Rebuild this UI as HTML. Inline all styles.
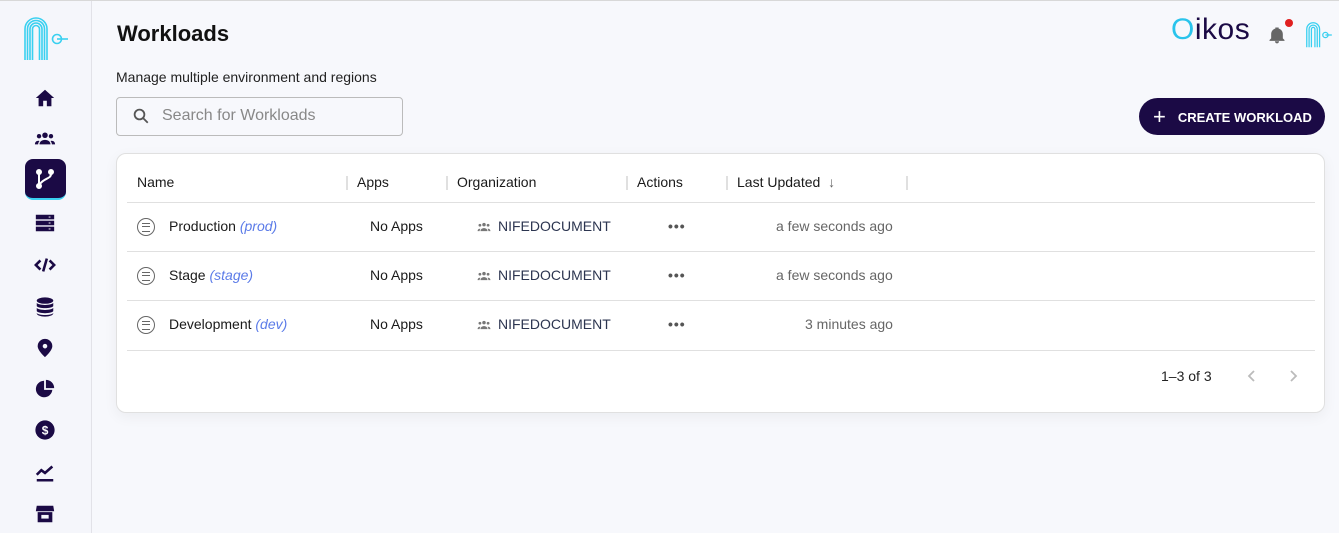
<!DOCTYPE html>
<html><head><style>
*{box-sizing:border-box;margin:0;padding:0}
body{width:1339px;height:532px;overflow:hidden;background:#f7f8fc;font-family:"Liberation Sans",sans-serif;color:#1a1a1a;position:relative;border-top:1px solid #d8d8d8}
.side{position:absolute;left:0;top:0;width:92px;height:532px;border-right:1px solid #e2e2e8;background:#f5f6fb}
.ic{position:absolute;left:34px;width:22px;height:22px}
.abs{position:absolute}
.card{position:absolute;left:116px;top:152px;width:1209px;height:260px;background:#fff;border:1px solid #e0e0e0;border-radius:10px;box-shadow:0 4px 14px rgba(0,0,0,.05)}
.hl{position:absolute;height:1px;background:#e0e0e0;left:10px;width:1188px}
.t{position:absolute;font-size:14px}
.sep{position:absolute;width:2px;height:14px;background:#e0e0e0;top:22px}
.org{color:#2c3550}
.dots{position:absolute;font-size:14px;letter-spacing:1px;color:#555;font-weight:bold}
.ri{position:absolute;left:20px;width:18px;height:18px;border:1.6px solid #666;border-radius:50%}
.ri:before{content:"";position:absolute;left:3.5px;top:3.5px;width:8px;height:7px;border-top:1.5px solid #666;border-bottom:1.5px solid #666}
.ri:after{content:"";position:absolute;left:3.5px;top:6.8px;width:8px;height:1.5px;background:#666}
</style></head><body>
<div class="side">
<svg class="abs" style="left:22px;top:14px" width="48" height="48" viewBox="0 0 48 48" fill="none" stroke="#3ad0f0" stroke-width="1.6">
<path d="M3 45V14a11 11 0 0 1 22 0v31"/><path d="M5.5 45V14a8.5 8.5 0 0 1 17 0v31"/><path d="M8 45V14a6 6 0 0 1 12 0v31"/><path d="M10.5 45V14a3.5 3.5 0 0 1 7 0v31"/>
<circle cx="35" cy="24" r="4.5"/><path d="M35 24h11"/></svg>
<svg class="ic" style="top:86px" viewBox="0 0 24 24" fill="#1b0a45"><path d="M12 3 2 12h3v9h5v-6h4v6h5v-9h3z"/></svg>
<svg class="ic" style="top:126px" viewBox="0 0 24 24" fill="#1b0a45"><circle cx="12" cy="9" r="3"/><circle cx="5.5" cy="10" r="2.4"/><circle cx="18.5" cy="10" r="2.4"/><path d="M6 19c0-3 2.5-5 6-5s6 2 6 5zM1 19c0-2.5 1.5-4 4-4l1 .3C5 16.5 4.5 18 4.5 19zM23 19c0-2.5-1.5-4-4-4l-1 .3c1 1.2 1.5 2.7 1.5 3.7z"/></svg>
<div class="abs" style="left:25px;top:158px;width:41px;height:41px;background:#1b0a45;border-radius:8px;border-bottom:2px solid #3ad0f0"></div>
<svg class="abs" style="left:33px;top:166px" width="24" height="24" viewBox="0 0 24 24" fill="none" stroke="#fff" stroke-width="2"><circle cx="6" cy="5" r="2" fill="#fff"/><circle cx="6" cy="19" r="2" fill="#fff"/><circle cx="18" cy="5" r="2" fill="#fff"/><path d="M6 7v10M18 7c0 5-7 4-11 10"/></svg>
<svg class="ic" style="top:211px" viewBox="0 0 24 24" fill="#1b0a45"><rect x="2" y="3" width="20" height="5"/><rect x="2" y="9.5" width="20" height="5"/><rect x="2" y="16" width="20" height="5"/><g fill="#fff"><rect x="16" y="5" width="2" height="1"/><rect x="16" y="11.5" width="2" height="1"/><rect x="16" y="18" width="2" height="1"/></g></svg>
<svg class="ic" style="top:253px" viewBox="0 0 24 24" fill="none" stroke="#1b0a45" stroke-width="2.8"><path d="M7 7 2 12l5 5M17 7l5 5-5 5M14 5l-4 14"/></svg>
<svg class="ic" style="top:295px" viewBox="0 0 24 24" fill="#1b0a45"><ellipse cx="12" cy="5" rx="9" ry="3.5"/><path d="M3 7.5c2 3 16 3 18 0V11c-2 3-16 3-18 0zM3 13c2 3 16 3 18 0v3.5c-2 3-16 3-18 0zM3 18.5c2 3 16 3 18 0V19c0 2-4 3.5-9 3.5S3 21 3 19z"/></svg>
<svg class="ic" style="top:336px" viewBox="0 0 24 24" fill="#1b0a45"><path d="M12 2a8 8 0 0 0-8 8c0 5 8 12 8 12s8-7 8-12a8 8 0 0 0-8-8zm0 5.5a2.5 2.5 0 1 1 0 5 2.5 2.5 0 0 1 0-5z"/></svg>
<svg class="ic" style="top:377px" viewBox="0 0 24 24" fill="#1b0a45"><path d="M11 3a9 9 0 1 0 9 10h-9zM13 2v9h9a9 9 0 0 0-9-9z"/></svg>
<svg class="ic" style="top:418px" viewBox="0 0 24 24"><circle cx="12" cy="12" r="10.5" fill="#1b0a45"/><text x="12" y="17" font-size="13" font-weight="bold" fill="#fff" text-anchor="middle" font-family="Liberation Sans">$</text></svg>
<svg class="ic" style="top:460px" viewBox="0 0 24 24" fill="none" stroke="#1b0a45" stroke-width="2.8"><path d="M3 15l5-5 4 3 8-7M3 21h18"/></svg>
<svg class="ic" style="top:502px" viewBox="0 0 24 24" fill="#1b0a45"><path d="M3 3h18l1 6H2zM4 10h16v11H4z"/><rect x="8" y="13" width="8" height="4" fill="#f5f6fb"/></svg>
</div>

<div class="abs" style="left:117px;top:20px;font-size:22px;font-weight:bold;color:#111">Workloads</div>
<div class="abs" style="left:116px;top:68px;font-size:14px;color:#222">Manage multiple environment and regions</div>
<div class="abs" style="left:116px;top:96px;width:287px;height:39px;border:1px solid #bbb;border-radius:4px;background:#f7f8fc"></div>
<svg class="abs" style="left:132px;top:106px" width="18" height="18" viewBox="0 0 24 24" fill="none" stroke="#555" stroke-width="2.4"><circle cx="10" cy="10" r="6.5"/><path d="M15 15l6 6"/></svg>
<div class="abs" style="left:162px;top:106px;font-size:16px;color:#888">Search for Workloads</div>

<div class="abs" style="left:1171px;top:12px;font-size:30px;color:#1b0a45;letter-spacing:.5px"><span style="color:#2ac4ec">O</span>ikos</div>
<svg class="abs" style="left:1267px;top:24px" width="20" height="20" viewBox="0 0 24 24" fill="#666"><path d="M12 22a2.5 2.5 0 0 0 2.5-2.5h-5A2.5 2.5 0 0 0 12 22zm7-6V11c0-3.3-2-6-5-6.7V3h-4v1.3C7 5 5 7.7 5 11v5l-2 2v1h18v-1z"/></svg>
<div class="abs" style="left:1285px;top:18px;width:8px;height:8px;border-radius:50%;background:#e02020"></div>
<svg class="abs" style="left:1305px;top:20px" width="28" height="28" viewBox="0 0 48 48" fill="none" stroke="#3ad0f0" stroke-width="2.2"><path d="M3 45V14a11 11 0 0 1 22 0v31"/><path d="M7 45V14a7 7 0 0 1 14 0v31"/><path d="M11 45V14a3 3 0 0 1 6 0v31"/><circle cx="35" cy="24" r="4.5"/><path d="M35 24h11"/></svg>

<div class="abs" style="left:1139px;top:97px;width:186px;height:37px;background:#1b0a45;border-radius:19px;color:#fff;font-size:13px;font-weight:bold;line-height:37px;padding-left:14px"><span style="font-size:22px;font-weight:normal;vertical-align:-2px;margin-right:12px">+</span>CREATE WORKLOAD</div>

<div class="card">
<div class="t" style="left:20px;top:20px">Name</div>
<div class="sep" style="left:229px"></div><div class="t" style="left:240px;top:20px">Apps</div>
<div class="sep" style="left:329px"></div><div class="t" style="left:340px;top:20px">Organization</div>
<div class="sep" style="left:509px"></div><div class="t" style="left:520px;top:20px">Actions</div>
<div class="sep" style="left:609px"></div><div class="t" style="left:620px;top:20px">Last Updated <span style="color:#666;margin-left:4px">↓</span></div>
<div class="sep" style="left:789px"></div>
<div class="hl" style="top:48px"></div>

<div class="ri" style="top:64px"></div><div class="t" style="left:52px;top:64px">Production <i style="color:#5b7be8">(prod)</i></div>
<div class="t" style="left:253px;top:64px">No Apps</div>
<svg class="abs" style="left:360px;top:67px" width="14" height="12" viewBox="0 0 24 20" fill="#777"><circle cx="12" cy="6" r="3"/><circle cx="5" cy="7" r="2.4"/><circle cx="19" cy="7" r="2.4"/><path d="M6 17c0-3 2.5-5 6-5s6 2 6 5zM1 17c0-2.5 1.5-4 4-4l1 .3C5 14.5 4.5 16 4.5 17zM23 17c0-2.5-1.5-4-4-4l-1 .3c1 1.2 1.5 2.7 1.5 3.7z"/></svg>
<div class="t org" style="left:381px;top:64px">NIFEDOCUMENT</div>
<div class="dots" style="left:551px;top:64px">•••</div>
<div class="t" style="left:659px;top:64px;color:#666">a few seconds ago</div>
<div class="hl" style="top:97px"></div>

<div class="ri" style="top:113px"></div><div class="t" style="left:52px;top:113px">Stage <i style="color:#5b7be8">(stage)</i></div>
<div class="t" style="left:253px;top:113px">No Apps</div>
<svg class="abs" style="left:360px;top:116px" width="14" height="12" viewBox="0 0 24 20" fill="#777"><circle cx="12" cy="6" r="3"/><circle cx="5" cy="7" r="2.4"/><circle cx="19" cy="7" r="2.4"/><path d="M6 17c0-3 2.5-5 6-5s6 2 6 5zM1 17c0-2.5 1.5-4 4-4l1 .3C5 14.5 4.5 16 4.5 17zM23 17c0-2.5-1.5-4-4-4l-1 .3c1 1.2 1.5 2.7 1.5 3.7z"/></svg>
<div class="t org" style="left:381px;top:113px">NIFEDOCUMENT</div>
<div class="dots" style="left:551px;top:113px">•••</div>
<div class="t" style="left:659px;top:113px;color:#666">a few seconds ago</div>
<div class="hl" style="top:146px"></div>

<div class="ri" style="top:162px"></div><div class="t" style="left:52px;top:162px">Development <i style="color:#5b7be8">(dev)</i></div>
<div class="t" style="left:253px;top:162px">No Apps</div>
<svg class="abs" style="left:360px;top:165px" width="14" height="12" viewBox="0 0 24 20" fill="#777"><circle cx="12" cy="6" r="3"/><circle cx="5" cy="7" r="2.4"/><circle cx="19" cy="7" r="2.4"/><path d="M6 17c0-3 2.5-5 6-5s6 2 6 5zM1 17c0-2.5 1.5-4 4-4l1 .3C5 14.5 4.5 16 4.5 17zM23 17c0-2.5-1.5-4-4-4l-1 .3c1 1.2 1.5 2.7 1.5 3.7z"/></svg>
<div class="t org" style="left:381px;top:162px">NIFEDOCUMENT</div>
<div class="dots" style="left:551px;top:162px">•••</div>
<div class="t" style="left:688px;top:162px;color:#666">3 minutes ago</div>
<div class="hl" style="top:196px"></div>

<div class="t" style="left:1044px;top:214px;color:#222">1–3 of 3</div>
<svg class="abs" style="left:1128px;top:214px" width="14" height="16" viewBox="0 0 14 16" fill="none" stroke="#bbb" stroke-width="1.8"><path d="M9 3 4 8l5 5"/></svg>
<svg class="abs" style="left:1169px;top:214px" width="14" height="16" viewBox="0 0 14 16" fill="none" stroke="#bbb" stroke-width="1.8"><path d="M5 3l5 5-5 5"/></svg>
</div>
</body></html>
